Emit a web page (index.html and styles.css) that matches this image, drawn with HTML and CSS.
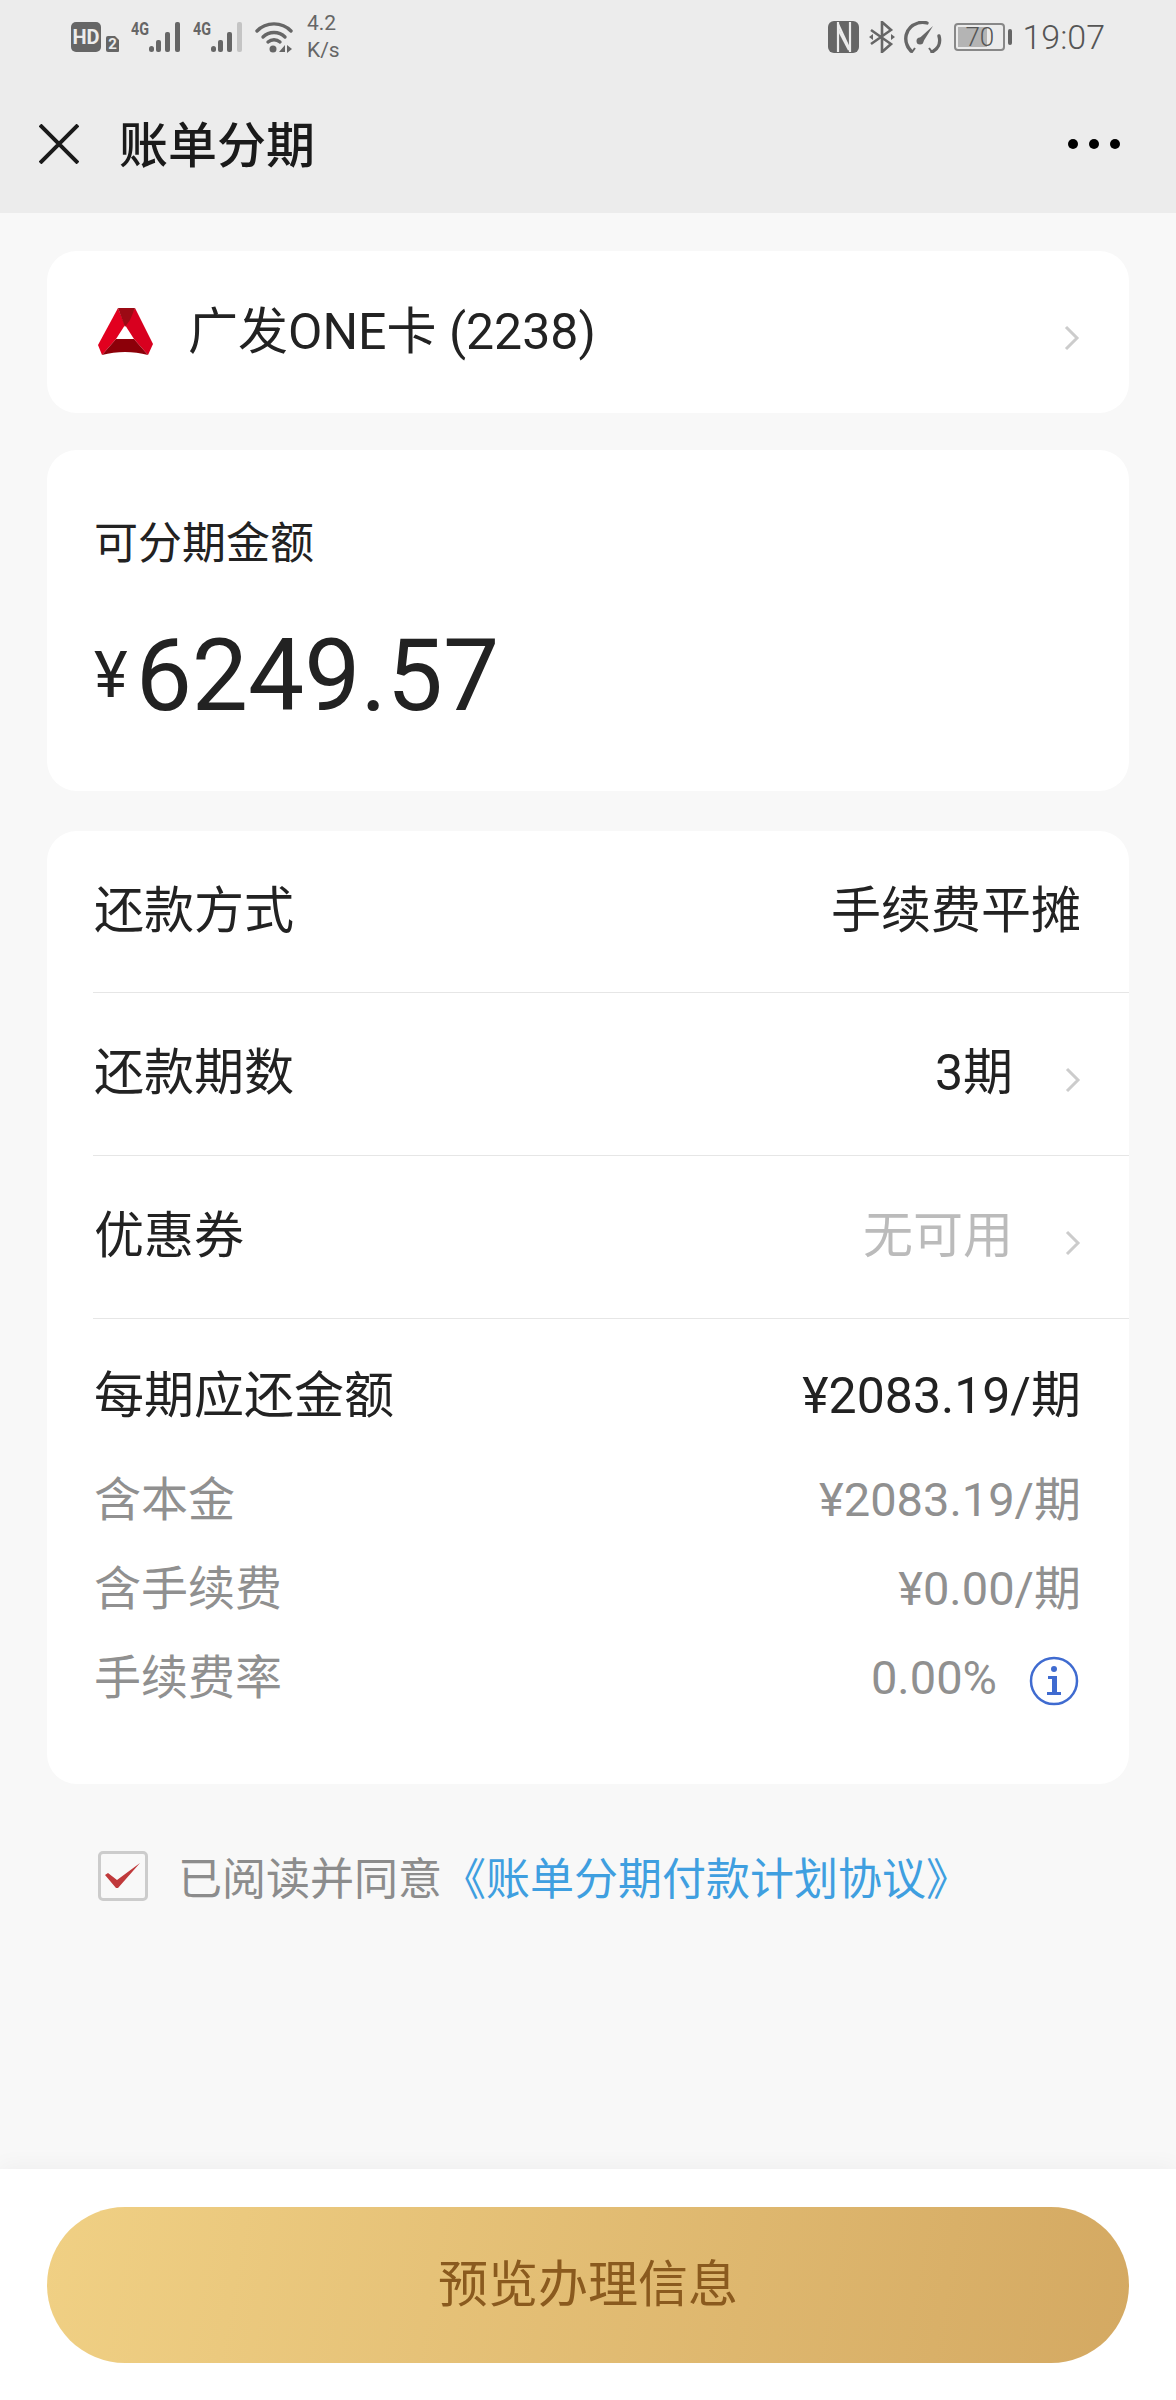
FILE: index.html
```html
<!DOCTYPE html>
<html lang="zh-CN">
  <head>
    <meta charset="UTF-8" />
    <title>账单分期</title>
    <link rel="stylesheet" href="styles.css">
  </head>
  <body>
    <div class="page">
      <!-- Top bar -->
      <header class="top">
        <div class="status">
          <div class="status-left">
            <svg class="ic-hd" width="48" height="30" viewBox="0 0 48 30">
              <rect width="30" height="30" rx="5" fill="#666"/>
              <text x="15" y="22" class="hd-text">HD</text>
              <path d="M37 14h7l4 4v11a1 1 0 0 1-1 1H37a2 2 0 0 1-2-2V16a2 2 0 0 1 2-2z" fill="#666"/>
              <text x="41.500" y="27" class="hd-two">2</text>
            </svg>
            <svg class="ic-signal" width="50" height="36" viewBox="0 -6 50 36">
              <text x="0" y="13" class="four-g" textLength="18" lengthAdjust="spacingAndGlyphs">4G</text>
              <g fill="#666">
                <rect x="18" y="24" width="5" height="6" rx="2.500"/>
                <rect x="25" y="18" width="5" height="12" rx="2"/>
                <rect x="34" y="10" width="5" height="20" rx="2"/>
                <rect x="44" y="0" width="5" height="30" rx="2"/>
              </g>
            </svg>
            <svg class="ic-signal" width="50" height="36" viewBox="0 -6 50 36">
              <text x="0" y="13" class="four-g" textLength="18" lengthAdjust="spacingAndGlyphs">4G</text>
              <g fill="#666">
                <rect x="18" y="24" width="5" height="6" rx="2.500"/>
                <rect x="25" y="18" width="5" height="12" rx="2"/>
                <rect x="34" y="10" width="5" height="20" rx="2"/>
              </g>
              <rect x="44" y="0" width="5" height="30" rx="2" fill="#c4c4c4"/>
            </svg>
            <svg width="38" height="32" viewBox="0 0 38 32">
              <g fill="none" stroke="#666" stroke-width="3.400" stroke-linecap="round">
                <path d="M2 10C11 .5 27 .5 36 10"/>
                <path d="M8 16c6-6 16-6 22 0"/>
                <path d="M13 21c3.500-3 8.500-3 12 0"/>
              </g>
              <circle cx="18" cy="28" r="3.500" fill="#666"/>
              <path d="M30 24v7h-6zM32 24l5 4-5 4z" fill="#666"/>
            </svg>
            <div class="speed">4.2<br>K/s</div>
          </div>
          <div class="status-right">
            <svg width="32" height="32" viewBox="0 0 32 32">
              <rect width="31" height="32" rx="6" fill="#666"/>
              <g fill="none" stroke="#ececec" stroke-width="2.200">
                <path d="M10 1v30"/>
                <path d="M10 3l12 26"/>
                <path d="M22 1v30"/>
                <path d="M21 29L10 8"/>
              </g>
            </svg>
            <svg width="26" height="32" viewBox="0 0 26 32">
              <path d="M2 9l20 14-9 8V1l9 8L2 23" fill="none" stroke="#666" stroke-width="2.600"/>
              <path d="M0 16l4-3v6zM26 16l-4-3v6z" fill="#666"/>
            </svg>
            <svg width="38" height="32" viewBox="0 0 38 32">
              <path d="M7 30C-2 20 1 6 14 2c3-1 6-1 9 0" fill="none" stroke="#666" stroke-width="3.400" stroke-linecap="round"/>
              <path d="M28 31c6-3 9-9 7-16" fill="none" stroke="#666" stroke-width="3.400" stroke-linecap="round"/>
              <path d="M29 5L19 21l-4-3.500z" fill="#666"/>
              <circle cx="16" cy="20" r="3.500" fill="#666"/>
              <path d="M3 26l5 5 3-4M25 27l3 4 3-3" fill="none" stroke="#666" stroke-width="2"/>
            </svg>
            <div class="battery">
              <div class="battery-body">
                <div class="battery-fill"></div>
                <span class="battery-num">70</span>
              </div>
              <div class="battery-nub"></div>
            </div>
            <div class="time">19:07</div>
          </div>
        </div>
        <div class="nav">
          <svg class="close" width="40" height="40" viewBox="0 0 40 40">
            <path d="M1 1l38 38M39 1L1 39" stroke="#1a1a1a" stroke-width="4" fill="none"/>
          </svg>
          <div class="nav-title">账单分期</div>
          <div class="more"><span></span><span></span><span></span></div>
        </div>
      </header>

      <main class="content">
        <!-- Card picker -->
        <div class="card card-bank">
          <svg class="bank-logo" width="56" height="50" viewBox="0 0 56 50">
            <path d="M20 1L0 38l4 10 14-16 9-14z" fill="#e2001f"/>
            <path d="M37 1l18 36-5 11-14-16-9-14z" fill="#d8001f"/>
            <path d="M20 1h17l-5 12-5 7z" fill="#9c0a14"/>
            <path d="M4 48l14-16h18l14 16c-15-4-31-4-46 0z" fill="#8c0009"/>
          </svg>
          <div class="bank-name">广发ONE卡 (2238)</div>
          <svg class="chev" width="16" height="26" viewBox="0 0 16 26"><path d="M2 2l11 11L2 24" /></svg>
        </div>

        <!-- Amount -->
        <div class="card card-amount">
          <div class="amount-label">可分期金额</div>
          <div class="amount"><span class="yen">¥</span>6249.57</div>
        </div>

        <!-- Plan details -->
        <div class="card card-plan">
          <div class="row">
            <span>还款方式</span>
            <span>手续费平摊</span>
          </div>
          <div class="row">
            <span>还款期数</span>
            <span class="row-val">3期<svg class="chev" width="16" height="26" viewBox="0 0 16 26"><path d="M2 2l11 11L2 24" /></svg></span>
          </div>
          <div class="row">
            <span>优惠券</span>
            <span class="row-val muted">无可用<svg class="chev" width="16" height="26" viewBox="0 0 16 26"><path d="M2 2l11 11L2 24" /></svg></span>
          </div>
          <div class="details">
            <div class="detail-head">
              <span>每期应还金额</span>
              <span>¥2083.19/期</span>
            </div>
            <div class="detail">
              <span>含本金</span>
              <span>¥2083.19/期</span>
            </div>
            <div class="detail">
              <span>含手续费</span>
              <span>¥0.00/期</span>
            </div>
            <div class="detail">
              <span>手续费率</span>
              <span class="rate">0.00%
                <svg class="info" width="50" height="50" viewBox="0 0 50 50">
                  <circle cx="25" cy="25" r="23" fill="none" stroke="#3f6bd0" stroke-width="2.500"/>
                  <circle cx="25" cy="13" r="3" fill="#3f6bd0"/>
                  <path d="M19 20h9v16h4v3H18v-3h5V23h-4z" fill="#3f6bd0"/>
                </svg>
              </span>
            </div>
          </div>
        </div>

        <div class="agree">
          <div class="checkbox">
            <svg width="36" height="26" viewBox="0 0 36 26"><path d="M0 12l3-2 9 7L35 0 13 25h-2z" fill="#c0393b"/></svg>
          </div>
          <div class="agree-text">已阅读并同意<a class="agree-link">《账单分期付款计划协议》</a></div>
        </div>
      </main>

      <footer class="bottom">
        <button class="btn">预览办理信息</button>
      </footer>
    </div>
  </body>
</html>
```

FILE: styles.css
```css
* {
  margin: 0;
  padding: 0;
  box-sizing: border-box;
  font-family: Roboto, "Noto Sans CJK SC", sans-serif;
}

body {
  background-color: #f8f8f8;
  color: #222;
}

.page {
  width: 1176px;
  height: 2400px;
  display: flex;
  flex-direction: column;
}

/* top bar */
.top {
  height: 213px;
  background-color: #ececec;
}

.status {
  height: 74px;
  padding: 0 71px;
  display: flex;
  justify-content: space-between;
  align-items: center;
  color: #666;
}

.status-left,
.status-right {
  display: flex;
  align-items: center;
}

.status-left {
  gap: 12px;
}

.status-right {
  gap: 9px;
}

.ic-signal {
  margin-top: -6px;
}

.hd-text {
  font-size: 20px;
  font-weight: 700;
  fill: #ececec;
  text-anchor: middle;
}

.hd-two {
  font-size: 15px;
  font-weight: 700;
  fill: #ececec;
  text-anchor: middle;
}

.four-g {
  font-size: 18px;
  font-weight: 700;
  fill: #666;
}

.speed {
  margin-left: 2px;
  font-size: 21px;
  line-height: 27px;
}

.battery {
  display: flex;
  align-items: center;
  gap: 3px;
  margin-left: 3px;
}

.battery-body {
  width: 51px;
  height: 28px;
  border: 2px solid #888;
  border-radius: 4px;
  padding: 2px;
  position: relative;
}

.battery-fill {
  width: 66%;
  height: 100%;
  background-color: #b4b4b4;
}

.battery-num {
  position: absolute;
  top: -2px;
  left: 9px;
  font-size: 26px;
  line-height: 28px;
  font-weight: 300;
  color: #555;
}

.battery-nub {
  width: 4px;
  height: 16px;
  background-color: #666;
  border-radius: 2px;
}

.time {
  margin-left: 1px;
  font-size: 34px;
  font-weight: 300;
  color: #555;
}

.nav {
  height: 139px;
  padding: 0 56px 0 39px;
  display: flex;
  align-items: center;
}

.nav-title {
  margin-left: 40px;
  padding-bottom: 5px;
  font-size: 49px;
  font-weight: 500;
  color: #1a1a1a;
  flex: 1;
}

.more {
  display: flex;
  gap: 11px;
}

.more span {
  width: 10px;
  height: 10px;
  border-radius: 50%;
  background-color: #000;
}

/* cards */
.content {
  padding: 38px 47px 0;
  flex: 1;
}

.card {
  background: #fff;
  border-radius: 30px;
}

.chev path {
  fill: none;
  stroke: #ccc;
  stroke-width: 3;
}

.card-bank {
  height: 162px;
  margin-bottom: 37px;
  padding: 0 49px 0 51px;
  display: flex;
  align-items: center;
}

.card-bank .chev {
  margin-top: 11px;
}

.bank-name {
  margin-left: 34px;
  margin-bottom: 10px;
  font-size: 50px;
  flex: 1;
}

.card-amount {
  height: 341px;
  margin-bottom: 40px;
  padding: 66px 47px 0;
}

.amount-label {
  font-size: 44px;
  line-height: 56px;
}

.amount {
  margin-top: 44px;
  font-size: 100px;
  line-height: 120px;
  display: flex;
  align-items: center;
}

.yen {
  font-size: 64px;
  margin-right: 8px;
}

.card-plan {
  height: 953px;
  padding-left: 46px;
}

.row {
  height: 163px;
  padding: 0 48px 12px 1px;
  border-bottom: 1px solid #e6e6e6;
  display: flex;
  justify-content: space-between;
  align-items: center;
  font-size: 50px;
}

.row:first-child {
  height: 162px;
}

.row-val {
  display: flex;
  align-items: center;
}

.row-val .chev {
  margin-left: 52px;
  margin-top: 24px;
}

.muted {
  color: #bbb;
}

.details {
  padding: 28px 48px 0 1px;
}

.detail-head,
.detail {
  display: flex;
  justify-content: space-between;
  align-items: center;
}

.detail-head {
  height: 88px;
  font-size: 50px;
  margin-bottom: 16px;
}

.detail {
  height: 89px;
  font-size: 47px;
  color: #909090;
}

.rate {
  padding-top: 8px;
  display: flex;
  align-items: center;
  gap: 32px;
}

.info {
  margin: 6px 2px 0 0;
}

/* agreement */
.agree {
  margin-top: 60px;
  padding-left: 51px;
  display: flex;
  align-items: center;
}

.checkbox {
  width: 50px;
  height: 50px;
  border: 3px solid #ccc;
  border-radius: 5px;
  display: flex;
  align-items: center;
  justify-content: center;
}

.agree-text {
  margin-left: 30px;
  font-size: 44px;
  color: #8c8c8c;
}

.agree-link {
  color: #3f9fe0;
}

/* bottom button */
.bottom {
  height: 231px;
  padding: 38px 47px 0;
  background: #fff;
  box-shadow: 0 -4px 20px rgba(0, 0, 0, 0.04);
}

.btn {
  width: 100%;
  height: 156px;
  padding-bottom: 10px;
  border: none;
  border-radius: 78px;
  background: linear-gradient(100deg, #f0d084, #d4a962);
  color: #8a5a1e;
  font-size: 50px;
}
```
